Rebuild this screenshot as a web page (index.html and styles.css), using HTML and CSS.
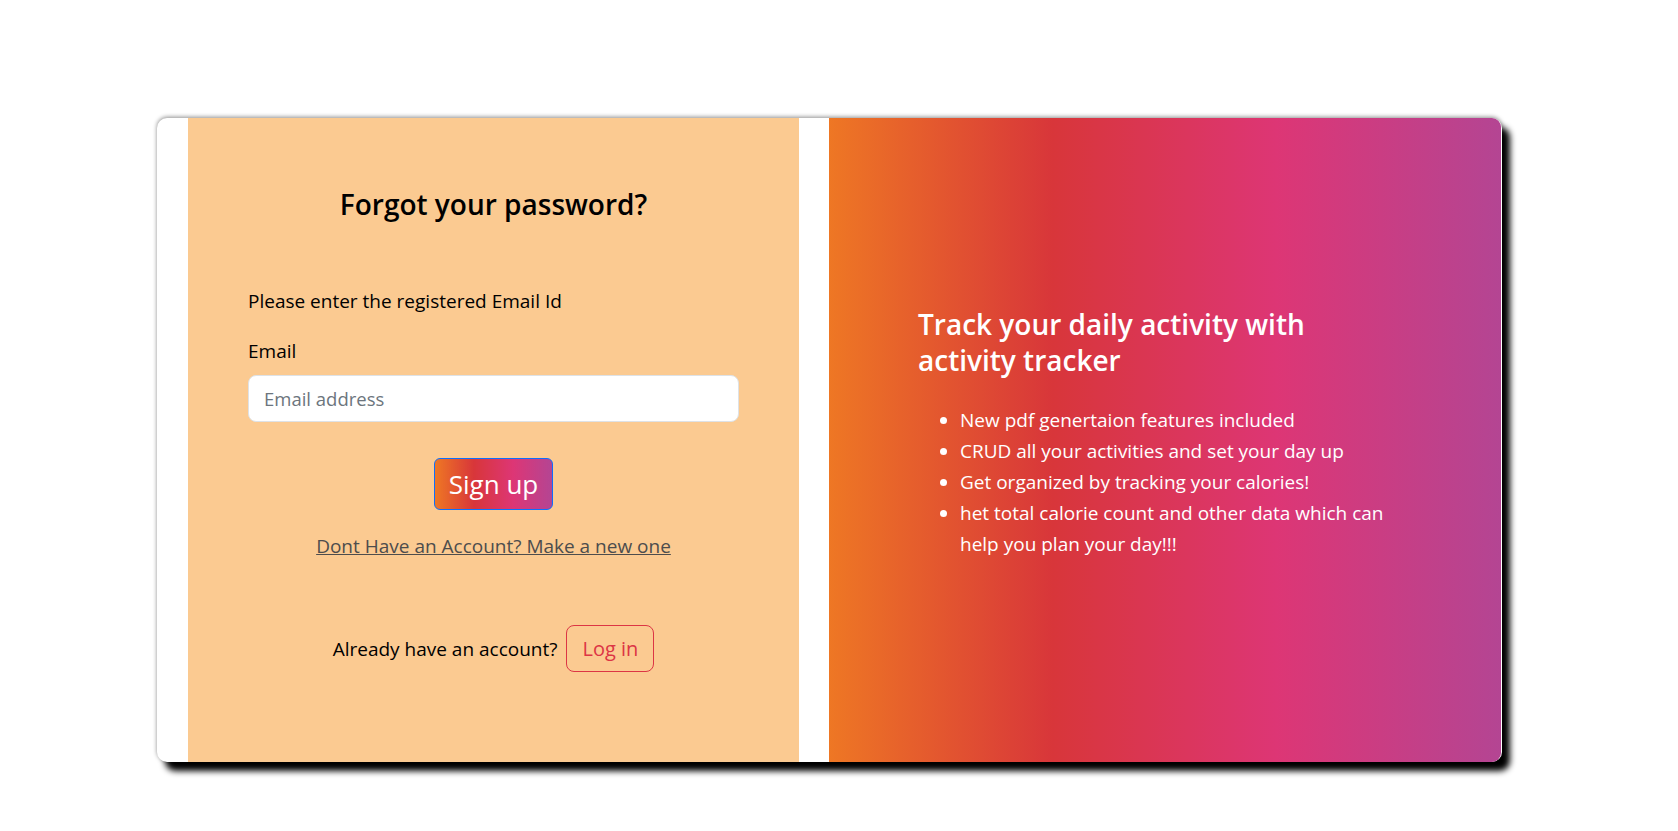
FILE: index.html
```html
<!DOCTYPE html>
<html lang="en">
<head>
<meta charset="utf-8">
<title>Forgot password</title>
<link rel="stylesheet" href="styles.css">
</head>
<body>
<div class="page">
  <div class="card">
    <section class="form-panel">
      <h3 class="form-title">Forgot your password?</h3>
      <p class="hint">Please enter the registered Email Id</p>
      <label class="field-label" for="email">Email</label>
      <input class="field-input" id="email" type="email" placeholder="Email address">
      <div class="center">
        <button class="btn-gradient" type="button">Sign up</button>
      </div>
      <div class="center">
        <a class="muted-link" href="#">Dont Have an Account? Make a new one</a>
      </div>
      <div class="login-row">
        <span class="login-text">Already have an account?</span>
        <button class="btn-outline" type="button">Log in</button>
      </div>
    </section>
    <section class="promo-panel">
      <div class="promo">
        <h3 class="promo-title">Track your daily activity with activity tracker</h3>
        <ul class="promo-list">
          <li>New pdf genertaion features included</li>
          <li>CRUD all your activities and set your day up</li>
          <li>Get organized by tracking your calories!</li>
          <li>het total calorie count and other data which can help you plan your day!!!</li>
        </ul>
      </div>
    </section>
  </div>
</div>
</body>
</html>
```
FILE: styles.css
```css
* { box-sizing: border-box; }
html, body { margin: 0; padding: 0; background: #fff; }
body {
  font-family: "Open Sans", "Noto Sans", sans-serif;
  color: #000;
}
.page {
  min-height: 100vh;
  padding: 118px 0 40px 157px;
}
.card {
  width: 1345px;
  height: 644px;
  background: #fff;
  border-radius: 10px;
  display: flex;
  padding-left: 31px;
  box-shadow: 8px 9px 6px #000, 0 -1px 4px rgba(0,0,0,0.45);
}
.form-panel {
  width: 611px;
  background: #fbca91;
  padding: 69px 60px 0 60px;
  display: flex;
  flex-direction: column;
}
.form-title {
  margin: 0;
  font-size: 28px;
  line-height: 34px;
  font-weight: 600;
  text-align: center;
}
.hint {
  margin: 68px 0 0 0;
  font-size: 19px;
  line-height: 24px;
}
.field-label {
  margin-top: 26px;
  font-size: 19px;
  line-height: 24px;
}
.field-input {
  margin-top: 12px;
  height: 47px;
  width: 100%;
  border: 1px solid #dee2e6;
  border-radius: 8px;
  padding: 0 15px;
  font-family: inherit;
  font-size: 18.5px;
  color: #212529;
  background: #fff;
  outline: none;
}
.field-input::placeholder { color: #6c757d; }
.center { display: flex; justify-content: center; }
.btn-gradient {
  margin-top: 36px;
  height: 52px;
  padding: 0 14px;
  border: 1px solid #0d6efd;
  border-radius: 6px;
  background: linear-gradient(to right, #ee7724, #d8363a, #dd3675, #b44593);
  color: #fff;
  font-family: inherit;
  font-size: 26px;
  line-height: 33px;
}
.muted-link {
  margin-top: 24px;
  font-size: 19px;
  line-height: 24px;
  color: #4d4d4d;
  text-decoration: underline;
}
.login-row {
  margin-top: 67px;
  display: flex;
  justify-content: center;
  align-items: center;
  gap: 9px;
}
.login-text {
  font-size: 19px;
  line-height: 24px;
}
.btn-outline {
  height: 47px;
  padding: 0 15px;
  border: 1px solid #dc3545;
  border-radius: 8px;
  background: transparent;
  color: #dc3545;
  font-family: inherit;
  font-size: 20px;
}
.promo-panel {
  margin-left: 30px;
  width: 672px;
  border-radius: 0 9px 9px 0;
  background: linear-gradient(to right, #ee7724, #d8363a, #dd3675, #b44593);
  color: #fff;
  padding: 188px 0 0 89px;
}
.promo { width: 480px; }
.promo-title {
  margin: 0;
  width: 430px;
  font-size: 28px;
  line-height: 36px;
  font-weight: 600;
}
.promo-list {
  margin: 27px 0 0 0;
  padding-left: 42px;
  font-size: 19px;
  line-height: 31px;
}
```
